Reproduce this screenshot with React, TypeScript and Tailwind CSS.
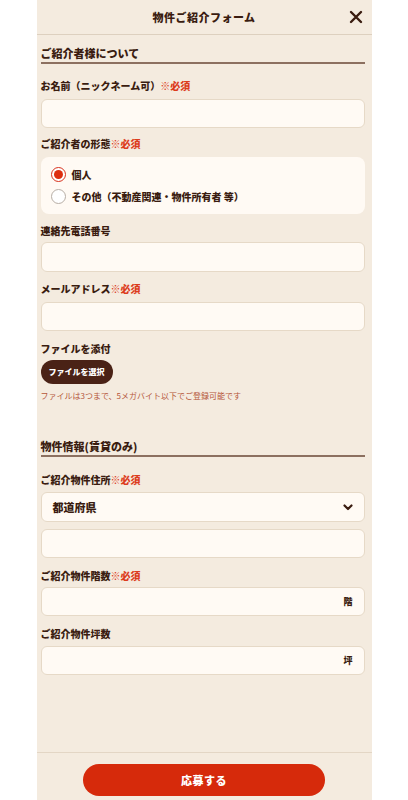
import React from "react";

const font = { fontFamily: '"Noto Sans CJK JP", "Noto Sans", sans-serif' };

function Label({ text, required }: { text: string; required?: boolean }) {
  return (
    <div className="h-4 leading-4 text-[10px] font-black text-[#3a1c10] whitespace-nowrap">
      {text}
      {required && <span className="text-[#dc3c1c]">※必須</span>}
    </div>
  );
}

function Input({ className = "", suffix }: { className?: string; suffix?: string }) {
  return (
    <div
      className={
        "flex items-center justify-end rounded-md border border-[#e6d9c7] bg-[#fffaf4] pr-[11px] " + className
      }
    >
      {suffix && <span className="text-[9px] font-black text-[#3a1c10]">{suffix}</span>}
    </div>
  );
}

function SectionTitle({ text, className = "" }: { text: string; className?: string }) {
  return (
    <div
      className={
        "h-[19px] border-b-2 border-[#8c7060] text-[11px] leading-4 font-black text-[#3a1c10] " + className
      }
    >
      {text}
    </div>
  );
}

function Radio({ checked, label }: { checked?: boolean; label: string }) {
  return (
    <div className="flex h-[22px] items-center">
      <span
        className={
          "ml-[10px] flex h-[15px] w-[15px] items-center justify-center rounded-full border " +
          (checked ? "border-[#d8301a] bg-white" : "border-[#b7aea5] bg-white")
        }
      >
        {checked && <span className="h-[9px] w-[9px] rounded-full bg-[#dd2e10]" />}
      </span>
      <span className="ml-[6px] text-[10px] font-black text-[#3a1c10]">{label}</span>
    </div>
  );
}

export default function App() {
  return (
    <div className="min-h-[800px] w-full bg-white" style={font}>
      <div className="mx-auto flex h-[800px] w-[335px] flex-col bg-[#f4ebdf]">
        <div className="relative flex h-[35px] shrink-0 items-center justify-center border-b border-[#ddd0bf]">
          <span className="text-[11px] font-black tracking-[0.5px] text-[#3a1c10]">物件ご紹介フォーム</span>
          <svg
            className="absolute right-[9px] top-[10px]"
            width="14"
            height="14"
            viewBox="0 0 14 14"
            fill="none"
            stroke="#3a1c10"
            strokeWidth="2.4"
            strokeLinecap="round"
          >
            <path d="M2 2 L12 12 M12 2 L2 12" />
          </svg>
        </div>

        <div className="flex-1 pl-[4px] pr-[7px]">
          <SectionTitle text="ご紹介者様について" className="mt-[10px]" />

          <div className="mt-[14px]">
            <Label text="お名前（ニックネーム可）" required />
          </div>
          <Input className="mt-[5px] h-[29px]" />

          <div className="mt-[8px]">
            <Label text="ご紹介者の形態" required />
          </div>
          <div className="mt-[5px] h-[57px] rounded-lg bg-[#fffaf4] pt-[6px]">
            <Radio checked label="個人" />
            <Radio label="その他（不動産関連・物件所有者 等）" />
          </div>

          <div className="mt-[9px]">
            <Label text="連絡先電話番号" />
          </div>
          <Input className="mt-[3px] h-[30px]" />

          <div className="mt-[9px]">
            <Label text="メールアドレス" required />
          </div>
          <Input className="mt-[5px] h-[29px]" />

          <div className="mt-[10px]">
            <Label text="ファイルを添付" />
          </div>
          <button className="mt-[3px] flex h-[24px] w-[72px] items-center justify-center rounded-full bg-[#4a2216] text-[8px] font-black text-white">
            ファイルを選択
          </button>
          <div className="mt-[6px] h-[12px] text-[8px] leading-[12px] text-[#b5563a] whitespace-nowrap">
            ファイルは3つまで、5メガバイト以下でご登録可能です
          </div>

          <SectionTitle text="物件情報(賃貸のみ)" className="mt-[36px]" />

          <div className="mt-[15px]">
            <Label text="ご紹介物件住所" required />
          </div>
          <div className="mt-[4px] flex h-[30px] items-center justify-between rounded-md border border-[#e6d9c7] bg-[#fffaf4] pl-[11px] pr-[10px]">
            <span className="text-[11px] font-black text-[#3a1c10]">都道府県</span>
            <svg width="12" height="12" viewBox="0 0 12 12" fill="none" stroke="#3a1c10" strokeWidth="2.2" strokeLinecap="round" strokeLinejoin="round">
              <path d="M2.5 4.5 L6 8 L9.5 4.5" />
            </svg>
          </div>
          <Input className="mt-[7px] h-[29px]" />

          <div className="mt-[10px]">
            <Label text="ご紹介物件階数" required />
          </div>
          <Input className="mt-[3px] h-[29px]" suffix="階" />

          <div className="mt-[10px]">
            <Label text="ご紹介物件坪数" />
          </div>
          <Input className="mt-[4px] h-[29px]" suffix="坪" />
        </div>

        <div className="flex h-[48px] shrink-0 justify-center border-t border-[#e3d6c5] pt-[11px]">
          <button className="flex h-[32px] w-[242px] items-center justify-center rounded-full bg-[#d62a0b] text-[11px] font-black tracking-[0.5px] text-white">
            応募する
          </button>
        </div>
      </div>
    </div>
  );
}
